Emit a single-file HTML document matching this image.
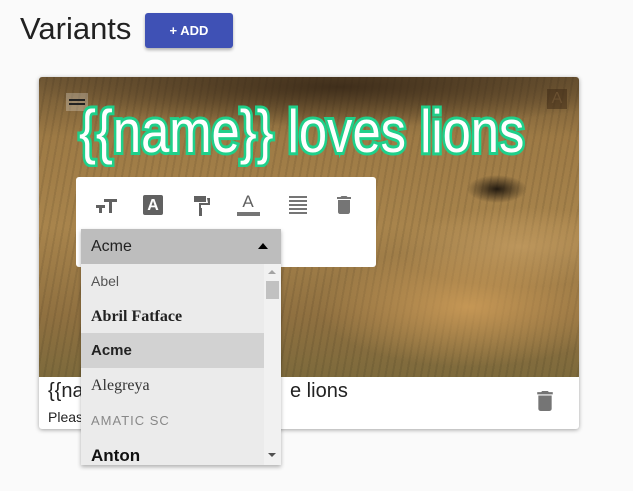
<!DOCTYPE html>
<html><head><style>
body{margin:0;width:633px;height:491px;background:#fafafa;font-family:"Liberation Sans",sans-serif;position:relative;overflow:hidden}
.abs{position:absolute}
h1{position:absolute;left:20px;top:11px;margin:0;font-weight:400;font-size:31px;color:#212121}
.btn{left:145px;top:13px;width:88px;height:35px;background:#3f51b5;color:#fff;border-radius:3px;font-size:13px;font-weight:bold;text-align:center;line-height:35px;box-shadow:0 2px 3px rgba(0,0,0,.3)}
.card{left:39px;top:77px;width:540px;height:352px;background:#fff;border-radius:3px;box-shadow:0 1px 4px rgba(0,0,0,.35);overflow:hidden}
.img{left:0;top:0;width:540px;height:300px;background:
radial-gradient(ellipse 30px 14px at 458px 112px,rgba(20,15,10,.9),transparent),
radial-gradient(ellipse 150px 60px at 430px 230px,rgba(210,160,90,.8),transparent),
radial-gradient(ellipse 120px 40px at 480px 170px,rgba(200,160,100,.7),transparent),
radial-gradient(ellipse 300px 40px at 300px 10px,rgba(50,35,20,.8),transparent),
repeating-linear-gradient(100deg,rgba(0,0,0,.08) 0 2px,transparent 2px 7px),
linear-gradient(180deg,#6d5533 0%,#9d7a45 20%,#a8844c 50%,#8f7040 80%,#7d6a3c 100%)}
.head{left:40px;top:20px;font-family:"Liberation Sans Narrow","Liberation Sans",sans-serif;font-size:60px;color:#fff;-webkit-text-stroke:6px #1fd08a;paint-order:stroke fill;white-space:nowrap;transform:scaleX(.845);transform-origin:left top}
.tb{left:76px;top:177px;width:300px;height:90px;background:#fff;border-radius:3px}
.dd{left:81px;top:229px;width:200px;height:236px;box-shadow:0 2px 4px rgba(0,0,0,.3)}
.ddh{left:0;top:0;width:200px;height:35px;background:#bdbdbd;font-size:16px;line-height:35px;color:#222}
.list{left:0;top:35px;width:200px;height:201px;background:#ebebeb;overflow:hidden}
.row{position:absolute;left:0;width:183px;height:35px;line-height:35px;padding-left:10px;box-sizing:border-box;color:#333}
</style></head><body>
<h1>Variants</h1>
<div class="abs btn">+ ADD</div>
<div class="abs card">
 <div class="abs img"></div>
 <div class="abs" style="left:27px;top:16px;width:22px;height:18px;background:rgba(255,255,255,.25)"><div class="abs" style="left:3px;top:6px;width:16px;height:2px;background:#222"></div><div class="abs" style="left:3px;top:10px;width:16px;height:2px;background:#222"></div></div>
 <div class="abs" style="left:508px;top:12px;width:20px;height:20px;background:rgba(60,40,20,.5);color:#6a5030;font-size:16px;text-align:center;line-height:20px">A</div>
 <div class="abs head">{{name}} loves lions</div>
 <div class="abs" style="left:9px;top:303px;font-size:20px;color:#222">{{name}} lov</div>
 <div class="abs" style="left:251px;top:303px;font-size:20px;color:#222">e lions</div>
 <div class="abs" style="left:9px;top:332px;font-size:14px;color:#222">Please</div>
 <svg class="abs" style="left:497px;top:314px" width="18" height="20" viewBox="5 3 14 18"><path d="M6 19c0 1.1.9 2 2 2h8c1.1 0 2-.9 2-2V7H6v12zM19 4h-3.5l-1-1h-5l-1 1H5v2h14V4z" fill="#757575"/></svg>
</div>
<div class="abs tb">
 <svg class="abs" style="left:19px;top:19px" width="22" height="18" viewBox="0 0 22 18"><path d="M9 3v3h5v11h3V6h5V3zM1 9v3h3v5h3v-5h3V9z" fill="#616161"/></svg>
 <div class="abs" style="left:67px;top:18px;width:20px;height:20px;background:#616161;border-radius:2px;color:#fff;font-weight:bold;font-size:16px;text-align:center;line-height:21px">A</div>
 <svg class="abs" style="left:116px;top:18px" width="20" height="22" viewBox="0 0 20 22"><path d="M2 1h12v6H2zM15 3h3v7H9v3H7v-5h9z M7 13h3v8H7z" fill="#616161"/></svg>
 <div class="abs" style="left:161px;top:16px;width:22px;height:22px;text-align:center;color:#616161;font-size:17px;line-height:18px">A</div>
 <div class="abs" style="left:161px;top:35px;width:23px;height:4px;background:#757575"></div>
 <div class="abs" style="left:213px;top:19px;width:18px;height:18px;background:repeating-linear-gradient(#757575 0 2px,transparent 2px 4px)"></div>
 <svg class="abs" style="left:261px;top:18px" width="14" height="20" viewBox="5 3 14 18"><path d="M6 19c0 1.1.9 2 2 2h8c1.1 0 2-.9 2-2V7H6v12zM19 4h-3.5l-1-1h-5l-1 1H5v2h14V4z" fill="#757575"/></svg>
</div>
<div class="abs dd">
 <div class="abs ddh"><span style="padding-left:10px">Acme</span><div class="abs" style="left:177px;top:14px;width:0;height:0;border-left:5px solid transparent;border-right:5px solid transparent;border-bottom:6px solid #000"></div></div>
 <div class="abs list">
  <div class="row" style="top:0;font-family:'Liberation Sans Narrow',sans-serif;font-size:14px;color:#555">Abel</div>
  <div class="row" style="top:35px;font-family:'Liberation Serif',serif;font-weight:bold;font-size:16px;color:#222">Abril Fatface</div>
  <div class="row" style="top:69px;height:35px;background:#d2d2d2;font-weight:bold;font-size:15px;color:#222">Acme</div>
  <div class="row" style="top:104px;font-family:'Liberation Serif',serif;font-size:16px">Alegreya</div>
  <div class="row" style="top:139px;font-family:'Liberation Sans Narrow',sans-serif;font-size:13px;color:#888;letter-spacing:1px">AMATIC SC</div>
  <div class="row" style="top:174px;font-family:'Liberation Sans Narrow',sans-serif;font-weight:bold;font-size:17px;color:#111">Anton</div>
  <div class="abs" style="left:183px;top:0;width:17px;height:201px;background:#f1f1f1"></div>
  <div class="abs" style="left:185px;top:17px;width:13px;height:18px;background:#c1c1c1"></div>
  <div class="abs" style="left:187px;top:6px;border-left:4px solid transparent;border-right:4px solid transparent;border-bottom:4px solid #a3a3a3"></div>
  <div class="abs" style="left:187px;top:189px;border-left:4px solid transparent;border-right:4px solid transparent;border-top:4px solid #505050"></div>
 </div>
</div>
</body></html>
